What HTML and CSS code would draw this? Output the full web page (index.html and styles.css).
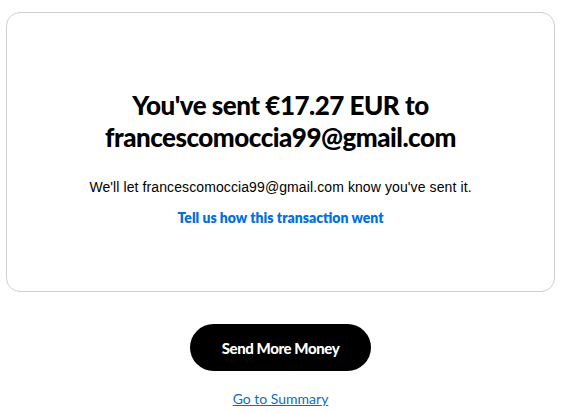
FILE: index.html
```html
<!DOCTYPE html>
<html>
<head>
<meta charset="utf-8">
<link rel="stylesheet" href="styles.css">
</head>
<body>
<div class="page">
  <div class="card">
    <h1 class="title">You've sent €17.27 EUR to<br>francescomoccia99@gmail.com</h1>
    <p class="note">We'll let francescomoccia99@gmail.com know you've sent it.</p>
    <a class="feedback" href="#">Tell us how this transaction went</a>
  </div>
  <div class="actions">
    <button class="primary">Send More Money</button>
    <a class="summary" href="#">Go to Summary</a>
  </div>
</div>
</body>
</html>
```
FILE: styles.css
```css
html, body {
  margin: 0;
  padding: 0;
  background: #ffffff;
}
.page {
  padding: 12px 12px 0 6px;
  font-family: "Lato", "Liberation Sans", sans-serif;
  color: #000;
}
.card {
  box-sizing: border-box;
  height: 280px;
  border: 1px solid #cfcfcf;
  border-radius: 14px;
  display: flex;
  flex-direction: column;
  align-items: center;
  padding-top: 76px;
}
.title {
  margin: 0;
  font-size: 26px;
  line-height: 32px;
  font-weight: 900;
  text-align: center;
  letter-spacing: -0.5px;
}
.note {
  margin: 24px 0 0;
  font-size: 14px;
  line-height: 20px;
  letter-spacing: 0.1px;
  font-family: "Liberation Sans", sans-serif;
}
.feedback {
  margin-top: 11px;
  font-size: 14px;
  line-height: 20px;
  font-weight: 800;
  color: #0070e0;
  text-decoration: none;
}
.actions {
  display: flex;
  flex-direction: column;
  align-items: center;
  padding-top: 32px;
}
.primary {
  width: 181px;
  height: 47px;
  border: none;
  border-radius: 24px;
  background: #000;
  color: #fff;
  font-family: "Lato", sans-serif;
  font-weight: 900;
  font-size: 15px;
  letter-spacing: -0.4px;
}
.summary {
  margin-top: 18px;
  font-size: 14px;
  line-height: 20px;
  color: #0a6ebd;
  text-decoration: underline;
}
```
